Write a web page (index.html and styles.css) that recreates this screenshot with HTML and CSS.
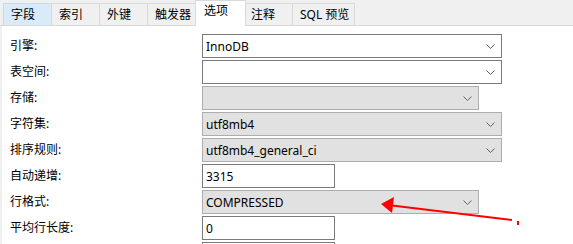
FILE: index.html
```html
<!DOCTYPE html>
<html lang="zh-CN">
  <head>
    <meta charset="UTF-8" />
    <title>表选项</title>
    <link rel="stylesheet" href="styles.css">
  </head>
  <body>
    <div class="tabs">
      <span class="tab hover">字段</span>
      <span class="tab">索引</span>
      <span class="tab">外键</span>
      <span class="tab">触发器</span>
      <span class="tab selected">选项</span>
      <span class="tab narrow">注释</span>
      <span class="tab wide">SQL 预览</span>
    </div>

    <div class="panel">
      <div class="form">
        <span class="label">引擎:</span>
        <div class="combo">
          <span>InnoDB</span>
          <svg class="chev" width="9" height="5" viewBox="0 0 9 5"><polyline points="0.5,0.5 4.5,4.5 8.5,0.5" /></svg>
        </div>

        <span class="label">表空间:</span>
        <div class="combo">
          <span></span>
          <svg class="chev" width="9" height="5" viewBox="0 0 9 5"><polyline points="0.5,0.5 4.5,4.5 8.5,0.5" /></svg>
        </div>

        <span class="label">存储:</span>
        <div class="combo gray short">
          <span></span>
          <svg class="chev" width="9" height="5" viewBox="0 0 9 5"><polyline points="0.5,0.5 4.5,4.5 8.5,0.5" /></svg>
        </div>

        <span class="label">字符集:</span>
        <div class="combo gray">
          <span>utf8mb4</span>
          <svg class="chev" width="9" height="5" viewBox="0 0 9 5"><polyline points="0.5,0.5 4.5,4.5 8.5,0.5" /></svg>
        </div>

        <span class="label">排序规则:</span>
        <div class="combo gray">
          <span>utf8mb4_general_ci</span>
          <svg class="chev" width="9" height="5" viewBox="0 0 9 5"><polyline points="0.5,0.5 4.5,4.5 8.5,0.5" /></svg>
        </div>

        <span class="label">自动递增:</span>
        <div class="edit">3315</div>

        <span class="label">行格式:</span>
        <div class="combo gray short">
          <span>COMPRESSED</span>
          <svg class="chev" width="9" height="5" viewBox="0 0 9 5"><polyline points="0.5,0.5 4.5,4.5 8.5,0.5" /></svg>
        </div>

        <span class="label">平均行长度:</span>
        <div class="edit">0</div>

        <!-- next row is cut off by the window edge -->
        <span class="label"></span>
        <div class="edit"></div>
      </div>
    </div>

    <!-- red annotation arrow drawn over the form -->
    <svg class="note" width="573" height="244" viewBox="0 0 573 244">
      <line x1="392" y1="205.5" x2="512" y2="220" stroke="#ff0000" stroke-width="2" />
      <polygon points="381,204 394,197 392,213" fill="#ff0000" />
      <rect x="517" y="221" width="2" height="4" fill="#ff0000" />
    </svg>
  </body>
</html>
```

FILE: styles.css
```css
body {
  margin: 0;
  width: 573px;
  height: 244px;
  overflow: hidden;
  background: #f0f0f0;
  font-family: "Noto Sans", "Noto Sans CJK SC", sans-serif;
  font-size: 12px;
  color: #000;
  position: relative;
}
.tabs {
  display: flex;
  align-items: flex-end;
  height: 25px;
  padding-left: 3px;
  border-bottom: 1px solid #d9d9d9;
}
.tab {
  box-sizing: border-box;
  width: 49px;
  height: 22px;
  margin-right: -1px;
  padding: 1px 0 0 7px;
  line-height: 20px;
  border: 1px solid #d9d9d9;
  border-bottom: none;
  background: #f0f0f0;
  white-space: nowrap;
}
.tab.hover {
  background: #d9ebf9;
  border-color: #c4dbef;
}
.tab.selected {
  position: relative;
  width: 51px;
  height: 26px;
  margin-bottom: -1px;
  padding: 0 0 0 8px;
  background: #fff;
  z-index: 1;
}
.tab.narrow {
  width: 48px;
  padding-left: 5px;
}
.tab.wide {
  width: 63px;
}
.panel {
  margin-left: 2px;
  height: 210px;
  overflow: hidden;
  background: #fff;
  padding: 8px 0 0 8px;
}
.form {
  display: grid;
  grid-template-columns: 192px auto;
  grid-auto-rows: 24px;
  row-gap: 2px;
  justify-items: start;
  align-items: center;
}
.label {
  line-height: 16px;
}
.combo,
.edit {
  box-sizing: border-box;
  height: 24px;
  display: flex;
  align-items: center;
  padding-left: 3px;
  border: 1px solid #7a7a7a;
  background: #fff;
  white-space: nowrap;
}
.combo {
  width: 300px;
  justify-content: space-between;
  padding-right: 6px;
}
.combo.gray {
  background: #e1e1e1;
  border-color: #adadad;
}
.combo.short {
  width: 277px;
}
.edit {
  width: 133px;
}
.chev polyline {
  fill: none;
  stroke: #606060;
  stroke-width: 1;
}
.note {
  position: absolute;
  left: 0;
  top: 0;
  pointer-events: none;
}
```
